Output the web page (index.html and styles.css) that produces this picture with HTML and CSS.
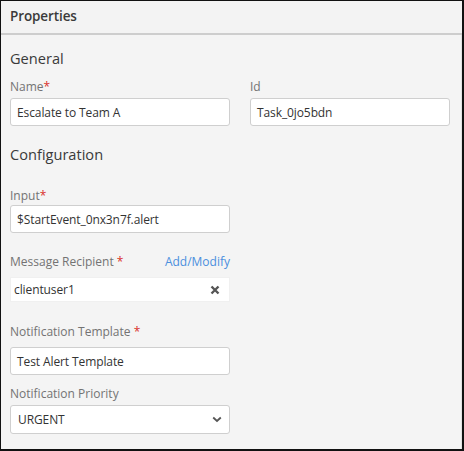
FILE: index.html
```html
<!DOCTYPE html>
<html>
<head>
<meta charset="utf-8">
<link rel="stylesheet" href="styles.css">
</head>
<body>
<div class="panel">
  <div class="header">Properties</div>
  <div class="body">
    <h2 class="section general">General</h2>
    <div class="row">
      <div class="field">
        <label class="label">Name<span class="req">*</span></label>
        <div class="input">Escalate to Team A</div>
      </div>
      <div class="field right">
        <label class="label">Id</label>
        <div class="input">Task_0jo5bdn</div>
      </div>
    </div>
    <h2 class="section config">Configuration</h2>
    <div class="field f-input">
      <label class="label">Input<span class="req">*</span></label>
      <div class="input">$StartEvent_0nx3n7f.alert</div>
    </div>
    <div class="field f-recipient">
      <div class="label-row">
        <label class="label">Message Recipient <span class="req">*</span></label>
        <a class="link">Add/Modify</a>
      </div>
      <div class="chipbox">
        <span>clientuser1</span>
        <svg class="x" width="10" height="10" viewBox="0 0 10 10"><path d="M1.5 1.5 L8.5 8.5 M8.5 1.5 L1.5 8.5" stroke="#555" stroke-width="2.4"/></svg>
      </div>
    </div>
    <div class="field f-template">
      <label class="label">Notification Template <span class="req">*</span></label>
      <div class="input">Test Alert Template</div>
    </div>
    <div class="field f-priority">
      <label class="label">Notification Priority</label>
      <div class="input select">
        <span>URGENT</span>
        <svg width="10" height="7" viewBox="0 0 10 7"><path d="M1.2 1.5 L5 5 L8.8 1.5" stroke="#555" stroke-width="1.8" fill="none"/></svg>
      </div>
    </div>
  </div>
</div>
</body>
</html>
```

FILE: styles.css
```css
html, body {
  margin: 0;
  padding: 0;
}
body {
  width: 464px;
  height: 451px;
  font-family: "Open Sans", "Noto Sans", sans-serif;
  color: #333;
}
.panel {
  box-sizing: border-box;
  width: 464px;
  height: 451px;
  border: 1px solid #111;
  border-right-width: 2px;
  border-bottom-width: 2px;
  background: #f4f4f4;
  overflow: hidden;
}
.header {
  height: 34px;
  box-sizing: border-box;
  padding: 6px 9px 0;
  font-size: 13.5px;
  line-height: 18px;
  font-weight: 600;
  color: #3a3a3a;
  border-bottom: 2px solid #cdcdcd;
  background: #f3f3f3;
  letter-spacing: -0.1px;
}
.body {
  padding: 0 9px;
  border-right: 1px solid #e2e2e2;
  height: 100%;
}
.section {
  margin: 0;
  font-size: 14.6px;
  font-weight: 400;
  color: #3a3a3a;
  line-height: 16px;
  box-sizing: border-box;
}
.section.general {
  height: 44px;
  padding-top: 15px;
}
.section.config {
  height: 62px;
  padding-top: 20px;
}
.row {
  display: flex;
  gap: 20px;
}
.field {
  width: 220px;
  display: flex;
  flex-direction: column;
}
.field.right {
  width: 200px;
}
.label {
  font-size: 12px;
  color: #737373;
  line-height: 16px;
  height: 16px;
  margin-bottom: 3px;
}
.req {
  color: #d9302c;
}
.input {
  box-sizing: border-box;
  height: 28px;
  border: 1px solid #cfcfcf;
  border-radius: 3px;
  background: #fff;
  font-size: 12px;
  color: #333;
  padding: 0 6px;
  display: flex;
  align-items: center;
  letter-spacing: -0.1px;
}
.f-input .label {
  margin-bottom: 1px;
}
.f-recipient {
  margin-top: 21px;
}
.label-row {
  display: flex;
  justify-content: space-between;
  align-items: baseline;
  height: 16px;
  margin-bottom: 7px;
}
.label-row .label {
  margin-bottom: 0;
}
.link {
  color: #4a8fde;
  font-size: 12px;
  line-height: 16px;
}
.chipbox {
  box-sizing: border-box;
  height: 25px;
  background: #fff;
  border: 1px solid #f0f0f0;
  display: flex;
  align-items: center;
  justify-content: space-between;
  padding: 0 9px 0 3px;
  font-size: 12px;
  color: #333;
  letter-spacing: -0.1px;
}
.f-template {
  margin-top: 22px;
}
.f-template .label {
  margin-bottom: 7px;
}
.f-priority {
  margin-top: 11px;
}
.select {
  height: 29px;
  justify-content: space-between;
  padding-right: 7px;
}
.select span {
  padding-left: 1px;
}
```
